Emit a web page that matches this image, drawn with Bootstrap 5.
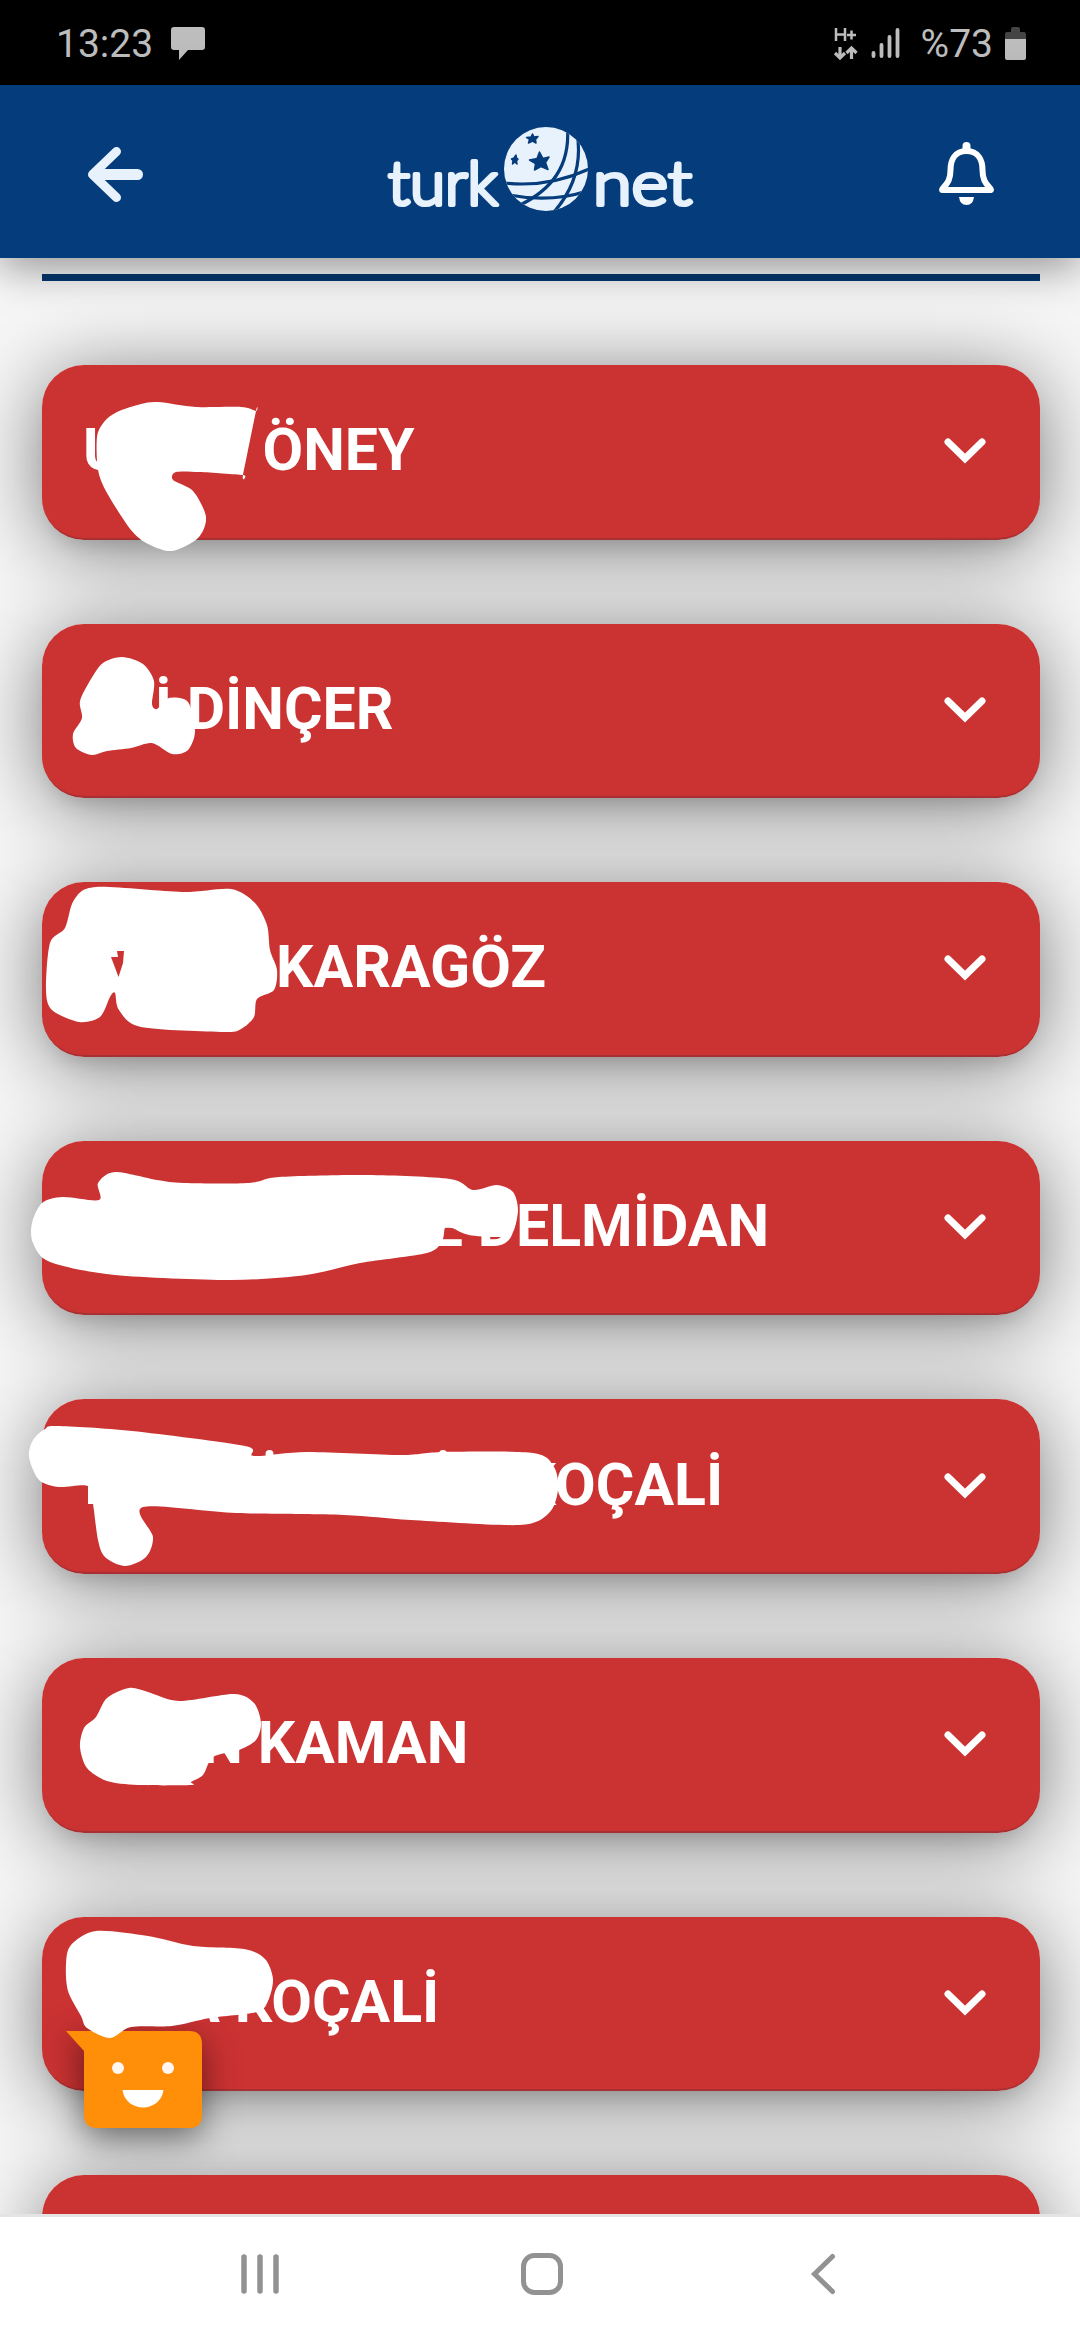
<!DOCTYPE html>
<html lang="tr">
<head>
<meta charset="utf-8">
<meta name="viewport" content="width=device-width, initial-scale=1">
<title>TurkNet</title>
<link href="https://cdn.jsdelivr.net/npm/bootstrap@5.3.0/dist/css/bootstrap.min.css" rel="stylesheet">
<style>
  body { width: 1080px; height: 2340px; overflow: hidden; font-family: Roboto, "Liberation Sans", sans-serif; background: #f6f6f6; }
  svg { display: block; overflow: visible; flex: none; }
  .status-bar { height: 85px; background: #000; color: #bdbdbd; font-size: 39px; line-height: 1; padding: 3px 54px 0 56px; }
  .top-bar { height: 173px; background: #053c7c; padding: 4px 86px 0; box-shadow: 0 10px 40px rgba(0,0,0,.4); z-index: 5; }
  .page-area { height: 1956px; isolation: isolate; padding: 16px 40px 0 42px; }
  .section-rule { height: 7px; background: #04376f; }
  .name-list { padding-top: 84px; gap: 84px; }
  .name-card { height: 174.6px; border-radius: 42px; background: #cb3232; border-bottom: 2px solid #a83032; color: #fff; padding: 0 54px 0 41px; }
  .name-card::before { content: ""; position: absolute; inset: 0 0 -2px; border-radius: 42px; z-index: -1; box-shadow: 0 9px 80px rgba(0,0,0,.5), 0 14px 18px -8px rgba(0,0,0,.1); }
  .name-text { font-size: 59px; font-weight: 700; line-height: 1; white-space: nowrap; padding-bottom: 3px; }
  .name-first { display: inline-block; text-align: right; }
  .w1 { width: 179.5px; text-align: left; } .w2 { width: 89px; } .w3 { width: 193px; }
  .w4 { width: 380px; } .w5 { width: 435.5px; } .w6 { width: 160px; } .w7 { width: 137px; }
  .scribble { position: absolute; left: 0; top: 0; z-index: 3; fill: #fff; }
  .chat-bot { position: absolute; left: 66px; top: 1773px; z-index: 2; filter: drop-shadow(0 10px 17px rgba(0,0,0,.5)); }
  .nav-keys { height: 126px; border-top: 3px solid #e4e4e4; background: #fff; z-index: 6; padding: 0 241px; }
  .logo-text { font-family: Lato, sans-serif; font-weight: 300; font-size: 61px; fill: #e8f2fd; stroke: #e8f2fd; stroke-width: 4.2; stroke-linejoin: round; }
</style>
<script src="https://cdn.jsdelivr.net/npm/bootstrap@5.3.0/dist/js/bootstrap.bundle.min.js"></script>
</head>
<body class="d-flex flex-column">
<div class="status-bar d-flex align-items-center flex-shrink-0">
  <span>13:23</span>
  <svg style="margin-left:18px" width="34" height="34" viewBox="0 0 34 34"><path fill="#bdbdbd" d="M3 0H31Q34 0 34 3V20Q34 23 31 23H17L8 33V23H3Q0 23 0 20V3Q0 0 3 0Z"/></svg>
  <svg class="ms-auto" width="67" height="34" viewBox="0 0 67 34" fill="none" stroke="#bdbdbd">
    <path stroke-width="2.500" d="M2 1V14M11 1V14M2 7.500H11M13 8H22M17.500 3.500V12.500"/>
    <path stroke-width="3.200" d="M6 20V31M1 26L6 31L11 26M17.500 32V21M12.500 26L17.500 21L22.500 26"/>
    <path stroke-width="3.800" stroke-linecap="round" d="M39.500 26V29M47.500 18V29M55.500 10V29M63.500 3V29"/>
  </svg>
  <span style="margin-left:20px">%73</span>
  <svg style="margin-left:12px" width="21" height="34" viewBox="0 0 21 34"><path fill="#444" d="M6 2Q6 0 8 0H13Q15 0 15 2V5H19Q21 5 21 7V13H0V7Q0 5 2 5H6Z"/><path fill="#bdbdbd" d="M0 12H21V31Q21 33 19 33H2Q0 33 0 31Z"/></svg>
</div>
<header class="top-bar position-relative d-flex align-items-center justify-content-between flex-shrink-0">
  <svg width="59" height="56" viewBox="86 146 59 56" fill="none" stroke="#e8f2fd" stroke-linejoin="round" stroke-linecap="round"><path stroke-width="9" d="M116.500 151.500L92.500 174.500L116.500 197.500"/><path stroke-width="11" d="M98 174.500H137.500"/></svg>
  <svg style="margin-right:2px;margin-top:-10px" width="308" height="86" viewBox="388 126 308 86">
    <defs><clipPath id="globe"><circle cx="547" cy="169" r="42"/></clipPath></defs>
    <text class="logo-text" x="389" y="204.500" textLength="110" lengthAdjust="spacingAndGlyphs">turk</text>
    <text class="logo-text" x="594" y="204.500" textLength="99" lengthAdjust="spacingAndGlyphs">net</text>
    <circle cx="547" cy="169" r="42" fill="#e8f2fd"/>
    <g clip-path="url(#globe)" fill="none" stroke="#053c7c" stroke-width="3.200">
      <path d="M568.500 128C571 166 553 190 519 206"/><path d="M578 133C583 162 576 188 555 212"/><path d="M505 183Q550 188 592 168"/><path d="M510 195Q552 203 588 191"/>
    </g>
    <g fill="#053c7c" stroke="#053c7c" stroke-width="1.500" stroke-linejoin="round">
      <path d="M540.500 152L544 158.500L550 157L546.500 162.500L549 169.500L542 166.500L535.500 170L536.500 163.500L530.500 160L538 158.500Z"/>
      <path d="M533.500 134L535 137L539 136.500L536.500 139.500L537 143L533.500 141L529.500 143L530.500 139.500L527.500 137.500L532 137Z"/>
      <path d="M517 155L517.500 158L519 159L517.500 161L518 164L516 162L513.500 164L514 160.500L512.500 159L515 158Z"/>
    </g>
  </svg>
  <svg width="55" height="63" viewBox="939 143 55 63" fill="none" stroke="#fff"><path stroke-width="6" stroke-linejoin="round" d="M966.500 152C955 152 950.500 161 950.500 171C950.500 180 948 184 943 189Q941 191.500 943 191H990Q992 191.500 990 189C985 184 982.500 180 982.500 171C982.500 161 978 152 966.500 152Z"/><path stroke-width="8" stroke-linecap="round" d="M966.500 147V151"/><path fill="#fff" stroke="none" d="M959 198H974Q973 206 966.500 206T959 198Z"/></svg>
</header>
<main class="page-area position-relative flex-shrink-0 overflow-hidden">
  <div class="section-rule"></div>
  <div class="name-list d-flex flex-column">
    <div class="name-card position-relative d-flex align-items-center justify-content-between flex-shrink-0">
      <div class="name-text"><span class="name-first w1">U</span>ÖNEY</div>
      <svg width="42" height="26" viewBox="0 0 42 26"><path fill="none" stroke="#fff" stroke-width="7" stroke-linecap="round" d="M4 4L21 20.500L38 4"/></svg>
      <svg class="scribble" width="998" height="174" viewBox="42 365 998 174"><path data-pts="104,422 117,412 141,404 158,402 196,407 241,407 256,411 256,411 243,475 243,475 200,472 176,472 173,480 193,491 206,517 198,538 172,551 148,544 131,530 107,493 98,470 97,437"/></svg>
    </div>
    <div class="name-card position-relative d-flex align-items-center justify-content-between flex-shrink-0">
      <div class="name-text"><span class="name-first w2">İ</span> DİNÇER</div>
      <svg width="42" height="26" viewBox="0 0 42 26"><path fill="none" stroke="#fff" stroke-width="7" stroke-linecap="round" d="M4 4L21 20.500L38 4"/></svg>
      <svg class="scribble" width="998" height="174" viewBox="42 623 998 174"><path data-pts="91,678 103,662 122,656 143,663 154,680 152,703 157,708 169,697 188,701 195,730 188,749 172,753 152,742 131,747 107,750 92,754 76,747 73,733 82,717 80,700"/></svg>
    </div>
    <div class="name-card position-relative d-flex align-items-center justify-content-between flex-shrink-0">
      <div class="name-text"><span class="name-first w3"></span>KARAGÖZ</div>
      <svg width="42" height="26" viewBox="0 0 42 26"><path fill="none" stroke="#fff" stroke-width="7" stroke-linecap="round" d="M4 4L21 20.500L38 4"/></svg>
      <svg class="scribble" width="998" height="174" viewBox="42 882 998 174"><path data-pts="65,928 74,900 96,887 182,892 231,889 255,903 267,925 270,950 277,970 274,990 257,999 254,1017 241,1029 224,1032 141,1027 119,1010 115,993 110,997 100,1017 79,1022 52,1010 46,990 50,943"/><path fill="#cb3232" stroke="none" d="M117 951H124L123 963L118.500 977L111 957H118Z"/></svg>
    </div>
    <div class="name-card position-relative d-flex align-items-center justify-content-between flex-shrink-0">
      <div class="name-text"><span class="name-first w4">E</span> DELMİDAN</div>
      <svg width="42" height="26" viewBox="0 0 42 26"><path fill="none" stroke="#fff" stroke-width="7" stroke-linecap="round" d="M4 4L21 20.500L38 4"/></svg>
      <svg class="scribble" width="998" height="174" viewBox="42 1141 998 174"><path data-pts="42,1203 63,1197 99,1200 98,1183 115,1172 157,1180 184,1183 249,1183 279,1177 367,1175 450,1179 473,1190 497,1185 513,1192 518,1210 513,1232 501,1237 469,1235 452,1228 445,1228 442,1241 427,1253 360,1263 306,1275 230,1280 115,1275 50,1262 33,1243 32,1223"/></svg>
    </div>
    <div class="name-card position-relative d-flex align-items-center justify-content-between flex-shrink-0">
      <div class="name-text"><span class="name-first w5"></span>KOÇALİ</div>
      <svg width="42" height="26" viewBox="0 0 42 26"><path fill="none" stroke="#fff" stroke-width="7" stroke-linecap="round" d="M4 4L21 20.500L38 4"/></svg>
      <svg class="scribble" width="998" height="174" viewBox="42 1399 998 174"><path data-pts="45,1429 57,1426 132,1431 245,1446 254,1456 307,1452 401,1455 444,1452 533,1453 554,1467 558,1490 549,1513 519,1525 411,1520 344,1515 236,1513 143,1507 153,1537 146,1557 125,1566 105,1557 98,1540 93,1504 88,1486 59,1487 39,1480 29,1457 33,1440"/><path d="M88 1484H96V1504H88Z"/><circle cx="269.500" cy="1454" r="4"/><circle cx="443" cy="1454" r="4"/></svg>
    </div>
    <div class="name-card position-relative d-flex align-items-center justify-content-between flex-shrink-0">
      <div class="name-text"><span class="name-first w6">N</span> KAMAN</div>
      <svg width="42" height="26" viewBox="0 0 42 26"><path fill="none" stroke="#fff" stroke-width="7" stroke-linecap="round" d="M4 4L21 20.500L38 4"/></svg>
      <svg class="scribble" width="998" height="174" viewBox="42 1658 998 174"><path data-pts="96,1717 107,1698 129,1688 148,1692 179,1701 234,1694 254,1703 261,1723 256,1740 239,1750 213,1757 203,1775 191,1782 191,1785 138,1785 107,1781 87,1768 80,1747 84,1728"/></svg>
    </div>
    <div class="name-card position-relative d-flex align-items-center justify-content-between flex-shrink-0">
      <div class="name-text"><span class="name-first w7">A</span> KOÇALİ</div>
      <svg width="42" height="26" viewBox="0 0 42 26"><path fill="none" stroke="#fff" stroke-width="7" stroke-linecap="round" d="M4 4L21 20.500L38 4"/></svg>
      <svg class="scribble" width="998" height="174" viewBox="42 1916 998 174"><path data-pts="71,1944 96,1930 148,1935 193,1945 244,1948 265,1958 273,1978 268,2000 257,2011 210,2017 172,2025 131,2026 110,2037 87,2027 81,2015 68,1990 66,1963"/></svg>
    </div>
    <div class="name-card position-relative flex-shrink-0"></div>
  </div>
  <svg class="chat-bot" width="136" height="97" viewBox="66 2031 136 97"><path fill="#ff8f08" d="M66 2031H189Q202 2031 202 2044V2115Q202 2128 189 2128H97Q84 2128 84 2115V2051Z"/><circle cx="118" cy="2068" r="6" fill="#fff6f0"/><circle cx="168" cy="2068" r="6" fill="#fff6f0"/><path fill="#fff" d="M122.500 2090H163.500C162 2101 153 2107.500 143 2107.500S124 2101 122.500 2090Z"/></svg>
</main>
<nav class="nav-keys position-relative d-flex align-items-center justify-content-between flex-shrink-0">
  <svg style="margin-top:-9px" width="38" height="42" viewBox="0 0 38 42"><path fill="none" stroke="#929292" stroke-width="5.500" stroke-linecap="round" d="M3 4V38M19 4V38M35 4V38"/></svg>
  <svg style="margin-top:-9px;margin-right:6px" width="42" height="42" viewBox="0 0 42 42"><rect x="2.500" y="2.500" width="37" height="37" rx="11" fill="none" stroke="#929292" stroke-width="5"/></svg>
  <svg style="margin-top:-9px;margin-right:4px" width="24" height="42" viewBox="0 0 24 42"><path fill="none" stroke="#929292" stroke-width="5" stroke-linecap="round" d="M21.500 3.500L3.500 21L21.500 38.500"/></svg>
</nav>
<script>
  // Turn each list of points into a smooth closed curve.
  document.querySelectorAll('[data-pts]').forEach(function (el) {
    var p = el.dataset.pts.split(' ').map(function (s) { return s.split(',').map(Number); });
    var n = p.length, k = 7, d = 'M' + p[0];
    for (var i = 0; i < n; i++) {
      var a = p[(i + n - 1) % n], b = p[i], c = p[(i + 1) % n], e = p[(i + 2) % n];
      d += 'C' + [b[0] + (c[0] - a[0]) / k, b[1] + (c[1] - a[1]) / k, c[0] - (e[0] - b[0]) / k, c[1] - (e[1] - b[1]) / k, c[0], c[1]];
    }
    el.setAttribute('d', d + 'Z');
  });
</script>
</body>
</html>
